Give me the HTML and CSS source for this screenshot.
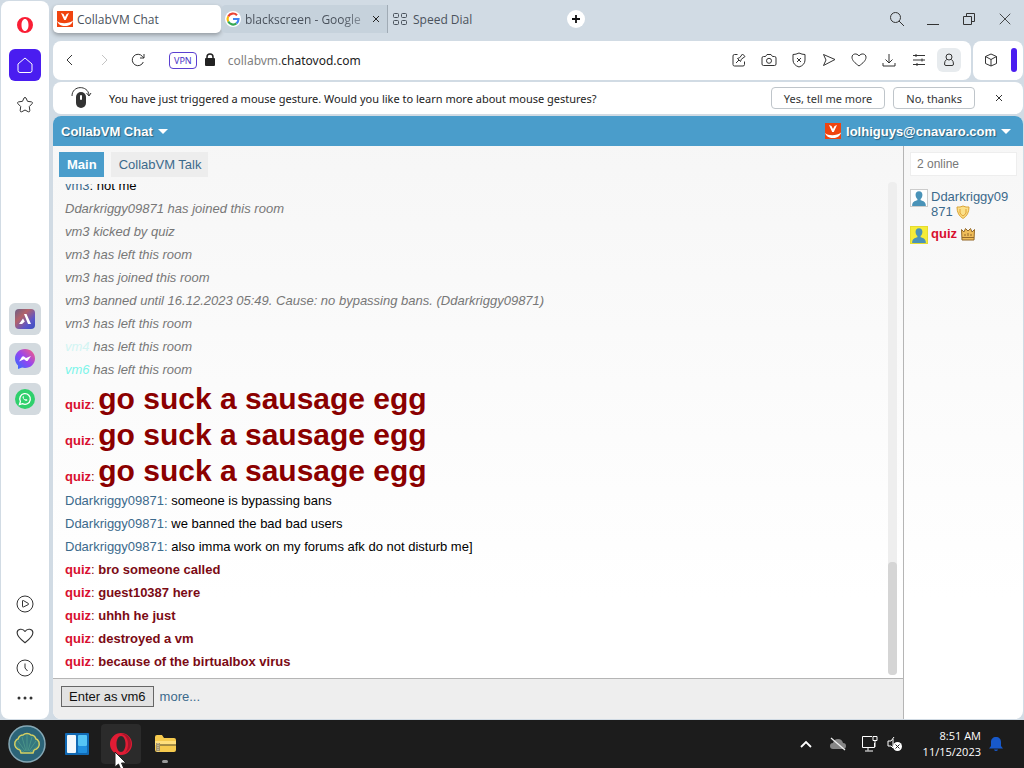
FILE: index.html
```html
<!DOCTYPE html>
<html lang="en">
<head>
  <title>CollabVM Chat</title>
  <meta charset="UTF-8">
  <link rel="stylesheet" href="styles.css">
</head>
<body>
  <!-- Shared icons -->
  <svg class="defs" width="0" height="0">
    <symbol id="chatovod" viewBox="0 0 16 16">
      <rect width="16" height="16" fill="#f0440f"/>
      <path d="M4 2l2.500 1L8 6l1.600-3L12 2 8.800 9H7.200z" fill="#fff"/>
      <path d="M0 10c3 3 12 3 16-.500C15 13.500 12 15 8 15s-7-2-8-5z" fill="#fff"/>
    </symbol>
    <symbol id="heart" viewBox="0 0 16 16">
      <path d="M8 14C4 11 1 8.500 1 5.200 1 1.500 6 .800 8 4c2-3.200 7-2.500 7 1.200C15 8.500 12 11 8 14z"/>
    </symbol>
    <symbol id="person" viewBox="2 1.500 14 14">
      <path d="M9 2.500c-2 0-3 1.300-3 3.200 0 1.700.6 2.900 1.600 3.600v1.200C5 11.200 3 12 3 15.500h12c0-3.500-2-4.300-4.600-5V9.300c1-.7 1.600-1.900 1.600-3.600 0-1.900-1-3.200-3-3.200z" fill="#4a93b8"/>
    </symbol>
    <symbol id="cross" viewBox="0 0 16 16">
      <path d="M2 2l12 12M14 2L2 14"/>
    </symbol>
  </svg>

  <div class="browser">
    <nav class="sidebar">
      <div class="side-group side-top">
        <a href="#" class="side-item" aria-label="Opera">
          <svg width="18" height="18" viewBox="0 0 18 18"><path fill-rule="evenodd" fill="#fa1e35" d="M9 1a8 8 0 1 0 0 16A8 8 0 0 0 9 1zm0 2c2 0 3.500 2.500 3.500 6S11 15 9 15s-3.500-2.500-3.500-6S7 3 9 3z"/></svg>
        </a>
        <a href="#" class="side-item side-home" aria-label="Home">
          <svg class="line" width="18" height="18" viewBox="0 0 18 18"><path d="M2 8l7-6 7 6v6.500a2 2 0 0 1-2 2H4a2 2 0 0 1-2-2z"/></svg>
        </a>
        <a href="#" class="side-item" aria-label="Bookmarks">
          <svg class="line" width="18" height="18" viewBox="0 0 18 18"><path d="M8 2q1-1.300 2 0l1.500 3.300 4 .6q1.700.5.600 1.800l-2.800 2.800.5 4q0 1.700-1.500 1.300L9 14l-3.300 1.800q-1.500.4-1.500-1.300l.5-4-2.800-2.800q-1.100-1.300.6-1.800l4-.6z"/></svg>
        </a>
      </div>
      <div class="side-group">
        <a href="#" class="side-item side-app" aria-label="Aria">
          <svg width="20" height="20" viewBox="0 0 20 20">
            <defs><linearGradient id="aria" x1="0" y1="0" x2="1" y2="1"><stop offset="0" stop-color="#6a5f86"/><stop offset=".35" stop-color="#b3626a"/><stop offset=".7" stop-color="#5c56c8"/><stop offset="1" stop-color="#3a50c0"/></linearGradient></defs>
            <rect width="20" height="20" rx="4" fill="url(#aria)"/><path d="M9 5h2.500l4.500 10h-3zM8 9.500l1.800 3L7 15H4z" fill="#fff"/>
          </svg>
        </a>
        <a href="#" class="side-item side-app" aria-label="Messenger">
          <svg width="20" height="20" viewBox="0 0 20 20">
            <defs><linearGradient id="msgr" x1="0" y1="1" x2="1" y2="0"><stop offset="0" stop-color="#2a70ff"/><stop offset=".5" stop-color="#9545f0"/><stop offset="1" stop-color="#ff5f78"/></linearGradient></defs>
            <path d="M10 0c5.800 0 10 4.200 10 9.500S15.800 19 10 19c-1 0-2-.1-2.900-.4L3 20v-3.500C1 14.700 0 12.300 0 9.500 0 4.200 4.200 0 10 0z" fill="url(#msgr)"/>
            <path d="M4 12.500l3-4.700q1-1 2-.3l2 1.600 5-2.100-3.100 4.500q-.9 1-1.900.3l-2-1.500z" fill="#fff"/>
          </svg>
        </a>
        <a href="#" class="side-item side-app" aria-label="WhatsApp">
          <svg width="20" height="20" viewBox="0 0 20 20">
            <circle cx="10" cy="10" r="10" fill="#2fd06c"/>
            <path d="M4.500 15.500l.9-3a5.300 5.300 0 1 1 2.100 2.100z" fill="none" stroke="#fff" stroke-width="1.300"/>
            <path d="M8 7.200c-.8.700-.4 2 .8 3.300 1.300 1.300 2.700 1.800 3.500.9l.1-.7-1.400-.8-.8.7c-.8-.3-1.400-.9-1.800-1.700l.6-.7-.6-1.200z" fill="#fff"/>
          </svg>
        </a>
      </div>
      <div class="side-group side-bottom">
        <a href="#" class="side-item" aria-label="Player">
          <svg class="line" width="18" height="18" viewBox="0 0 18 18"><circle cx="9" cy="9" r="8"/><path d="M6.500 6q0-.8.800-.5l5 2.900q.8.600 0 1.200l-5 2.400q-.8.300-.8-.6z"/></svg>
        </a>
        <a href="#" class="side-item" aria-label="Pinboards"><svg class="line" width="18" height="18"><use href="#heart"/></svg></a>
        <a href="#" class="side-item" aria-label="History">
          <svg class="line" width="18" height="18" viewBox="0 0 18 18"><circle cx="9" cy="9" r="8"/><path d="M9 4.500V9l2.500 3"/></svg>
        </a>
        <a href="#" class="side-item side-more" aria-label="More">
          <svg width="16" height="4" viewBox="0 0 16 4" fill="#333"><circle cx="2" cy="2" r="1.500"/><circle cx="8" cy="2" r="1.500"/><circle cx="14" cy="2" r="1.500"/></svg>
        </a>
      </div>
    </nav>

    <main class="window">
      <div class="tab-bar">
        <div class="tab tab-active">
          <svg width="16" height="16"><use href="#chatovod"/></svg>
          <span>CollabVM Chat</span>
        </div>
        <div class="tab tab-hover">
          <svg width="16" height="16" viewBox="0 0 16 16"><circle cx="8" cy="8" r="8" fill="#fff"/><g fill="none" stroke-width="2.200"><path d="M12 4.200A5.500 5.500 0 0 0 3.200 5.400" stroke="#ea4335"/><path d="M3.200 5.400a5.500 5.500 0 0 0 0 5.200" stroke="#fbbc05"/><path d="M3.200 10.600a5.500 5.500 0 0 0 8.300 1.700" stroke="#34a853"/><path d="M11.500 12.300A5.400 5.400 0 0 0 13.500 8H8" stroke="#4285f4"/></g></svg>
          <span class="tab-title">blackscreen - Google</span>
          <button class="tab-close" aria-label="Close tab"><svg class="line" width="8" height="8" viewBox="0 0 16 16" stroke-width="2"><use href="#cross"/></svg></button>
        </div>
        <div class="tab tab-plain">
          <svg class="line" width="14" height="14" viewBox="0 0 14 14"><rect x=".5" y="1.500" width="5" height="4" rx="1"/><rect x="8.500" y="1.500" width="5" height="4" rx="1"/><rect x=".5" y="8.500" width="5" height="4" rx="1"/><rect x="8.500" y="8.500" width="5" height="4" rx="1"/></svg>
          <span>Speed Dial</span>
        </div>
        <button class="new-tab" aria-label="New tab"><svg width="8" height="8" viewBox="0 0 8 8"><path d="M4 0v8M0 4h8" stroke="#111" stroke-width="1.800"/></svg></button>
        <div class="window-controls">
          <button aria-label="Search tabs"><svg class="line" width="16" height="16" viewBox="0 0 16 16"><circle cx="6.500" cy="6.500" r="5"/><path d="M10 10l5 5"/></svg></button>
          <button aria-label="Minimize"><svg class="line" width="12" height="12" viewBox="0 0 12 12"><path d="M0 11.500h12"/></svg></button>
          <button aria-label="Restore"><svg class="line" width="12" height="12" viewBox="0 0 12 12"><path d="M.500 3.500h8v8h-8zM3.500 3.500v-3h8v8h-3"/></svg></button>
          <button aria-label="Close"><svg class="line" width="14" height="14" viewBox="0 0 16 16"><use href="#cross"/></svg></button>
        </div>
      </div>

      <div class="toolbar">
        <div class="address-bar">
          <button class="nav-btn" aria-label="Back"><svg class="line" width="12" height="12" viewBox="0 0 12 12"><path d="M8 1L3 6l5 5"/></svg></button>
          <button class="nav-btn" aria-label="Forward" disabled><svg class="line" width="12" height="12" viewBox="0 0 12 12"><path d="M4 1l5 5-5 5"/></svg></button>
          <button class="nav-btn" aria-label="Reload"><svg class="line" width="14" height="14" viewBox="0 0 14 14"><path d="M12.300 9A5.700 5.700 0 1 1 11.500 3.500L13 5M13 1v4H9"/></svg></button>
          <button class="vpn">VPN</button>
          <svg width="12" height="14" viewBox="0 0 12 14"><rect x="1" y="5" width="10" height="8" rx="1" fill="#222"/><path d="M3 6V4a3 3 0 0 1 6 0v2" fill="none" stroke="#222" stroke-width="1.500"/></svg>
          <span class="url">collabvm.<b>chatovod.com</b></span>
          <div class="tools">
            <button aria-label="Edit"><svg class="line" width="16" height="16" viewBox="0 0 16 16"><path d="M6.500 2.500h-3q-1.500 0-1.500 1.500v8.500Q2 14 3.500 14H12q1.500 0 1.500-1.500v-3M5 11l3-3M6.500 6.500l3 3 .8-2.200L14 4.500 11.500 2 8.700 5.700z"/></svg></button>
            <button aria-label="Snapshot"><svg class="line" width="16" height="16" viewBox="0 0 16 16"><path d="M2.500 4.500h2L6 2.500h4l1.500 2h2q1.500 0 1.500 1.500v6q0 1.500-1.500 1.500h-11Q1 13.500 1 12V6q0-1.500 1.500-1.500z"/><circle cx="8" cy="8.800" r="2.500"/></svg></button>
            <button aria-label="Ad blocker"><svg class="line" width="16" height="16" viewBox="0 0 16 16"><path d="M8 1q3 1.500 6 1.500V8q0 5-6 7-6-2-6-7V2.500Q5 2.500 8 1zM6 6l4 4M10 6l-4 4"/></svg></button>
            <button aria-label="Flow"><svg class="line" width="16" height="16" viewBox="0 0 16 16"><path d="M2.500 2.500l11.500 5-11.500 6L5 8z"/></svg></button>
            <button aria-label="Favorite"><svg class="line" width="16" height="16"><use href="#heart"/></svg></button>
            <button aria-label="Downloads"><svg class="line" width="16" height="16" viewBox="0 0 16 16"><path d="M8 2v9M4.500 7.500L8 11l3.500-3.500M2 11v3h12v-3"/></svg></button>
            <button aria-label="Easy setup"><svg class="line" width="16" height="16" viewBox="0 0 16 16"><path d="M2 3.500h12M2 8h12M2 12.500h12M5 2v3M11 6.500v3M6 11v3"/></svg></button>
            <button class="tool-on" aria-label="Profile"><svg class="line" width="16" height="16" viewBox="0 0 16 16"><circle cx="8" cy="5" r="3"/><path d="M5.500 7.500Q3.500 9 3.500 12q0 1.500 1.500 1.500h6q1.500 0 1.500-1.500 0-3-2-4.500"/></svg></button>
          </div>
        </div>
        <div class="extensions">
          <button aria-label="Extensions"><svg class="line" width="14" height="14" viewBox="0 0 14 14"><path d="M7 1l5.500 2.500v7L7 13l-5.500-2.500v-7zM1.500 3.500L7 6.500l5.500-3M7 6.500V13"/></svg></button>
          <span class="purple-bar"></span>
        </div>
      </div>

      <div class="notice">
        <svg width="22" height="24" viewBox="0 0 22 24"><rect x="5" y="6" width="10" height="16" rx="5" fill="#333"/><rect x="9" y="9" width="2" height="5" rx="1" fill="#fff"/><path d="M1 10C1 -1 17 -1 18 9M15.500 7l2.500 3 2-3" fill="none" stroke="#333"/></svg>
        <p>You have just triggered a mouse gesture. Would you like to learn more about mouse gestures?</p>
        <button class="notice-btn">Yes, tell me more</button>
        <button class="notice-btn">No, thanks</button>
        <button class="notice-close" aria-label="Dismiss"><svg class="line" width="8" height="8" viewBox="0 0 16 16" stroke-width="2"><use href="#cross"/></svg></button>
      </div>

      <div class="page">
        <header class="chat-header">
          <a href="#" class="menu-link">CollabVM Chat<span class="caret"></span></a>
          <a href="#" class="menu-link"><svg width="16" height="16"><use href="#chatovod"/></svg>lolhiguys@cnavaro.com<span class="caret"></span></a>
        </header>
        <div class="chat-body">
          <section class="room">
            <div class="room-tabs">
              <a href="#" class="room-tab room-active">Main</a>
              <a href="#" class="room-tab">CollabVM Talk</a>
            </div>
            <div class="log-wrap">
              <div class="log">
                <p><span class="nick">vm3</span>: not me</p>
                <p class="event">Ddarkriggy09871 has joined this room</p>
                <p class="event">vm3 kicked by quiz</p>
                <p class="event">vm3 has left this room</p>
                <p class="event">vm3 has joined this room</p>
                <p class="event">vm3 banned until 16.12.2023 05:49. Cause: no bypassing bans. (Ddarkriggy09871)</p>
                <p class="event">vm3 has left this room</p>
                <p class="event"><span class="nick-pale">vm4</span> has left this room</p>
                <p class="event"><span class="nick-aqua">vm6</span> has left this room</p>
                <p class="shout"><span class="nick-red">quiz</span>: <strong>go suck a sausage egg</strong></p>
                <p class="shout"><span class="nick-red">quiz</span>: <strong>go suck a sausage egg</strong></p>
                <p class="shout"><span class="nick-red">quiz</span>: <strong>go suck a sausage egg</strong></p>
                <p><span class="nick">Ddarkriggy09871:</span> someone is bypassing bans</p>
                <p><span class="nick">Ddarkriggy09871:</span> we banned the bad bad users</p>
                <p><span class="nick">Ddarkriggy09871:</span> also imma work on my forums afk do not disturb me]</p>
                <p class="quiz"><span class="nick-red">quiz</span>: <strong>bro someone called</strong></p>
                <p class="quiz"><span class="nick-red">quiz</span>: <strong>guest10387 here</strong></p>
                <p class="quiz"><span class="nick-red">quiz</span>: <strong>uhhh he just</strong></p>
                <p class="quiz"><span class="nick-red">quiz</span>: <strong>destroyed a vm</strong></p>
                <p class="quiz"><span class="nick-red">quiz</span>: <strong>because of the birtualbox virus</strong></p>
              </div>
              <div class="scrollbar"><div class="thumb"></div></div>
            </div>
            <div class="enter-bar">
              <button class="enter-btn">Enter as vm6</button>
              <a href="#">more...</a>
            </div>
          </section>
          <aside class="users">
            <div class="online">2 online</div>
            <ul>
              <li>
                <svg class="avatar" width="18" height="18"><use href="#person"/></svg>
                <a href="#">Ddarkriggy09871 <svg class="badge" width="14" height="14" viewBox="0 0 14 14"><path d="M1 2q3 .5 6-1 3 1.500 6 1 0 8-6 11.500Q1 10 1 2z" fill="#fbe08a" stroke="#dba436"/><path d="M4 4v4q1 2 3 3 2-1 3-3V4" fill="none" stroke="#e0a030"/></svg></a>
              </li>
              <li>
                <svg class="avatar avatar-yellow" width="18" height="18"><use href="#person"/></svg>
                <a href="#" class="owner">quiz <svg class="badge" width="14" height="14" viewBox="0 0 14 14"><path d="M1 13L.5 2.500 3 5l1.500-3.500L7 4l2.500-2.500L11 5l2.500-2.500L13 13z" fill="#f0bd58" stroke="#94692a"/><path d="M1 10.500h12M4 9V7M7 9V6M10 9V7" stroke="#94692a"/></svg></a>
              </li>
            </ul>
          </aside>
        </div>
      </div>
    </main>
  </div>

  <footer class="taskbar">
    <button class="start" aria-label="Start">
      <svg width="38" height="38" viewBox="0 0 38 38">
        <circle cx="19" cy="19" r="18" fill="#2c6478" stroke="#86a8b5" stroke-width="1.500"/>
        <path d="M13 28h12l1-3c4-1 6-4 5-8-1-2-2-3-3-3-1-3-3-4-5-4-2-2-6-2-8 0-2 0-4 1-5 4-1 0-2 1-3 3-1 4 1 7 5 8z" fill="#35787e" stroke="#d5cf62" stroke-width="1.500"/>
        <path d="M17 26l-7-10M18 26l-4-14M19 26V10M20 26l4-14M21 26l7-10M16 27l-8-6M22 27l8-6" stroke="#4a9488" stroke-width="1"/>
      </svg>
    </button>
    <button class="task" aria-label="Widgets">
      <svg width="24" height="22" viewBox="0 0 24 22"><rect width="24" height="22" rx="1" fill="#1069b4"/><rect x="2" y="2" width="9" height="18" rx="1" fill="#f2f8fc"/><rect x="13" y="2" width="9" height="11" rx="1" fill="#55c4f5"/><rect x="13" y="13" width="9" height="7" rx="1" fill="#2090e0"/></svg>
    </button>
    <button class="task task-active" aria-label="Opera">
      <svg width="24" height="24" viewBox="0 0 24 24"><path fill-rule="evenodd" fill="#e01c34" d="M12 1a11 11 0 1 0 0 22 11 11 0 0 0 0-22zm0 3c2.500 0 4.500 3.500 4.500 8s-2 8-4.500 8-4.500-3.500-4.500-8S9.500 4 12 4z"/><path d="M12 2c9-2 15 13 4 19 4-5 4-13 0-17-1-1-2.500-2-4-2z" fill="#a5152a"/></svg>
      <svg class="cursor" width="14" height="20" viewBox="0 0 14 20"><path d="M1 1v15l3.500-3 2.500 6 3-1.300L7.500 12H12z" fill="#fff" stroke="#222"/></svg>
    </button>
    <button class="task task-open" aria-label="Files">
      <svg width="22" height="20" viewBox="0 0 22 20"><path d="M1 3q0-2 2-2h5l2 3h10q2 0 2 2v10q0 2-2 2H3q-2 0-2-2z" fill="#f6ca4e"/><path d="M1 7h21v4H1z" fill="#ffdf7c"/><path d="M4 11h18" stroke="#87753b" stroke-width="1.500"/><path d="M2 9h4v8H2z" fill="#a3946a"/><path d="M4 9v9" stroke="#ded6bf" stroke-dasharray="1 1"/></svg>
    </button>
    <div class="tray">
      <svg width="12" height="8" viewBox="0 0 12 8"><path d="M1 7l5-5 5 5" fill="none" stroke="#fff" stroke-width="1.800"/></svg>
      <svg class="tray-cloud" width="18" height="14" viewBox="0 0 18 14"><path d="M4 12Q1 12 1 9t3-3q1-4 5-4t5 4q3 0 3 3t-3 3z" fill="#868686"/><path d="M2 1l14 12" stroke="#eee" stroke-width="1.300"/></svg>
      <svg class="tray-net" width="18" height="18" viewBox="0 0 18 18" fill="none" stroke="#fff"><path d="M11 1.500H1.500v11h12V8M7 12.500v3M4 16h8M12 1.500h4v4h-4zM14 5.500V12"/></svg>
      <svg class="tray-sound" width="16" height="16" viewBox="0 0 16 16"><path d="M7 1L4 5H1v5h3l2 2V3" fill="none" stroke="#fff"/><circle cx="10.500" cy="10.500" r="4.500" fill="#fff"/><path d="M8.500 8.500l4 4M12.500 8.500l-4 4" stroke="#222"/></svg>
      <div class="clock"><div>8:51 AM</div><div>11/15/2023</div></div>
      <svg width="14" height="16" viewBox="0 0 14 16"><path d="M7 1C4 1 2 3 2 6v4l-2 2.500h14L12 10V6c0-3-2-5-5-5zM5 13.500h4Q8.500 15 7 15t-2-1.500z" fill="#1859ca"/></svg>
    </div>
  </footer>
</body>
</html>
```

FILE: styles.css
```css
:root {
  --chrome: #d1dbe4;
  --blue: #4a9dcb;
  --link: #3c6a8c;
  --ink: #333;
  --ui-font: "Open Sans", "Noto Sans", sans-serif;
  --wide-font: "Noto Sans", "Open Sans", sans-serif;
  --chat-font: "Liberation Sans", Arial, sans-serif;
}

* {
  box-sizing: border-box;
  margin: 0;
  padding: 0;
}

body {
  display: flex;
  flex-direction: column;
  height: 100vh;
  background: var(--chrome);
  color: var(--ink);
  font-family: var(--ui-font);
  font-size: 12px;
  overflow: hidden;
}

button {
  border: none;
  background: none;
  font: inherit;
  color: inherit;
  display: flex;
  align-items: center;
  justify-content: center;
}

a {
  color: var(--link);
  text-decoration: none;
}

svg {
  flex: none;
}

.defs {
  position: absolute;
}

.line {
  fill: none;
  stroke: currentColor;
  stroke-linejoin: round;
}

.browser {
  flex: 1;
  min-height: 0;
  display: flex;
  gap: 4px;
  padding: 0 1px 1px;
}

/* Sidebar */
.sidebar {
  width: 48px;
  flex: none;
  margin-top: 1px;
  padding: 8px 0 7px;
  background: #fff;
  border-radius: 8px;
  display: flex;
  flex-direction: column;
  justify-content: space-between;
}

.side-group {
  display: flex;
  flex-direction: column;
  align-items: center;
  gap: 8px;
}

.side-top {
  padding-bottom: 9px;
}

.side-bottom {
  gap: 0;
}

.side-item {
  width: 32px;
  height: 32px;
  border-radius: 6px;
  display: flex;
  align-items: center;
  justify-content: center;
  color: var(--ink);
}

.side-home {
  background: #4a1df0;
  color: #fff;
}

.side-app {
  background: #d3dadf;
}

.side-more {
  height: 28px;
}

/* Browser window */
.window {
  flex: 1;
  min-width: 0;
  display: flex;
  flex-direction: column;
}

.tab-bar {
  height: 41px;
  flex: none;
  display: flex;
  align-items: center;
  padding-bottom: 3px;
}

.tab {
  height: 28px;
  display: flex;
  align-items: center;
  gap: 4px;
  padding: 0 4px;
  border-radius: 5px;
  color: #4a525c;
}

.tab-active {
  width: 168px;
  background: #fff;
  box-shadow: 0 2px 4px rgba(0, 0, 0, 0.3);
}

.tab-hover {
  width: 167px;
  background: #c6d2dc;
  border-right: 1px solid #a0abb5;
  border-radius: 5px 0 0 5px;
}

.tab-title {
  flex: 1;
  white-space: nowrap;
  mask-image: linear-gradient(to right, #000 80%, rgba(0, 0, 0, 0.4));
}

.tab-close {
  width: 14px;
  height: 16px;
  color: #222;
}

.tab-plain {
  padding-left: 5px;
  gap: 6px;
}

.new-tab {
  width: 18px;
  height: 18px;
  margin-left: 91px;
  border-radius: 50%;
  background: #fff;
}

.window-controls {
  margin-left: auto;
  display: flex;
}

.window-controls button {
  width: 36px;
  height: 36px;
}

.toolbar {
  display: flex;
  gap: 2px;
  height: 39px;
  flex: none;
}

.address-bar,
.extensions {
  background: #fff;
  border-radius: 8px;
  display: flex;
  align-items: center;
}

.address-bar {
  flex: 1;
  padding: 0 7px 1px 0;
}

.nav-btn {
  width: 34px;
  height: 34px;
}

.nav-btn:disabled {
  color: #c4c4c4;
}

.vpn {
  height: 17px;
  margin: 0 7px 0 14px;
  padding: 0 4px;
  border: 1px solid #5a3fd0;
  border-radius: 4px;
  color: #4a30c8;
  font-family: var(--wide-font);
  font-size: 9px;
}

.url {
  margin-left: 12px;
  color: #808080;
  font-family: var(--wide-font);
  font-size: 12px;
}

.url b {
  color: #222;
  font-weight: normal;
}

.tools {
  margin-left: auto;
  display: flex;
}

.tools button {
  width: 30px;
  height: 24px;
}

.tools .tool-on {
  width: 24px;
  margin: 0 3px;
  background: #e7ebee;
  border-radius: 6px;
}

.extensions {
  width: 50px;
  justify-content: space-between;
  padding: 0 6px 1px 11px;
}

.purple-bar {
  width: 6px;
  height: 24px;
  border-radius: 3px;
  background: #4a1df0;
}

.notice {
  height: 32px;
  flex: none;
  margin: 2px 0;
  padding: 0 15px 0 18px;
  display: flex;
  align-items: center;
  background: #fff;
  border-radius: 8px;
  font-family: var(--wide-font);
  font-size: 11px;
}

.notice p {
  flex: 1;
  margin-left: 16px;
  color: #222;
  white-space: nowrap;
}

.notice-btn {
  height: 22px;
  margin-right: 8px;
  padding: 0 12px;
  border: 1px solid #bfc5ca;
  border-radius: 4px;
}

.notice-close {
  margin-left: 7px;
  width: 18px;
  height: 18px;
}

/* Chat page */
.page {
  flex: 1;
  min-height: 0;
  display: flex;
  flex-direction: column;
  border-radius: 8px;
  overflow: hidden;
  background: linear-gradient(#f6f6f6, #fff 80%);
  font-family: var(--chat-font);
  font-size: 13px;
}

.chat-header {
  height: 30px;
  flex: none;
  display: flex;
  align-items: center;
  justify-content: space-between;
  padding: 0 12px 0 8px;
  background: var(--blue);
}

.menu-link {
  display: flex;
  align-items: center;
  gap: 5px;
  color: #fff;
  font-weight: bold;
  text-shadow: 1px 1px 1px rgba(0, 0, 0, 0.4);
}

.caret {
  border: 5px solid transparent;
  border-top-color: #fff;
  border-bottom: none;
}

.chat-body {
  flex: 1;
  min-height: 0;
  display: flex;
}

.room {
  flex: 1;
  min-width: 0;
  display: flex;
  flex-direction: column;
}

.room-tabs {
  flex: none;
  display: flex;
  gap: 7px;
  padding: 6px 6px 5px;
}

.room-tab {
  padding: 0 7px 0 8px;
  line-height: 25px;
  background: #ededed;
}

.room-active {
  background: var(--blue);
  color: #fff;
  font-weight: bold;
}

.log-wrap {
  flex: 1;
  min-height: 0;
  display: flex;
  padding-right: 6px;
}

.log {
  flex: 1;
  display: flex;
  flex-direction: column;
  justify-content: flex-end;
  margin-top: 2px;
  padding: 0 12px 5px;
  overflow: hidden;
  color: #000;
}

.log p {
  flex: none;
  line-height: 23px;
}

.log .event {
  color: #777;
  font-style: italic;
}

.log .shout {
  height: 36px;
  line-height: 36px;
  color: #8b0000;
}

.shout strong {
  font-size: 30px;
}

.log .quiz {
  color: #7b0a14;
}

.nick {
  color: var(--link);
}

.nick-red {
  color: #d8102f;
  font-weight: bold;
}

.nick-pale {
  color: #d2f5f3;
}

.nick-aqua {
  color: #7df5ea;
}

.scrollbar {
  width: 9px;
  margin-bottom: 3px;
  display: flex;
  align-items: flex-end;
  background: #eee;
  border-radius: 4px;
}

.thumb {
  width: 100%;
  height: 23%;
  border-radius: 4px;
  background: #d5d5d5;
}

.enter-bar {
  height: 41px;
  flex: none;
  display: flex;
  align-items: center;
  gap: 4px;
  padding: 0 8px 5px;
  border-top: 1px solid #b5b5b5;
  background: #eee;
}

.enter-btn {
  height: 21px;
  padding: 0 7px;
  border: 1px solid #666;
  background: #e2e2e2;
  color: #111;
}

.enter-bar a {
  padding-left: 2px;
}

.users {
  width: 120px;
  flex: none;
  padding: 6px;
  border-left: 1px solid #b5b5b5;
}

.online {
  height: 24px;
  padding: 0 6px;
  border: 1px solid #eee;
  background: #fff;
  color: #777;
  font-size: 12px;
  line-height: 22px;
}

.users ul {
  margin-top: 13px;
  list-style: none;
}

.users li {
  display: flex;
  gap: 3px;
  margin-bottom: 7px;
  padding-right: 6px;
  line-height: 15px;
  word-break: break-all;
}

.avatar {
  border: 1px solid #ccc;
  background: #fff;
}

.avatar-yellow {
  border-color: #e5dc30;
  background: #f5ec38;
}

.badge {
  vertical-align: -3px;
}

.users .owner {
  color: #d8102f;
  font-weight: bold;
}

/* Taskbar */
.taskbar {
  height: 48px;
  flex: none;
  display: flex;
  align-items: center;
  gap: 4px;
  padding: 0 21px 0 8px;
  background: #1c1c1c;
  color: #fff;
}

.start {
  width: 45px;
  height: 40px;
  justify-content: flex-start;
}

.task {
  position: relative;
  width: 40px;
  height: 40px;
  border-radius: 4px;
}

.task-active {
  background: #2b2b2b;
}

.task-open::after {
  content: "";
  position: absolute;
  bottom: 1px;
  left: 17px;
  width: 6px;
  height: 3px;
  border-radius: 2px;
  background: #9a9a9a;
}

.cursor {
  position: absolute;
  left: 13px;
  top: 27px;
  z-index: 1;
}

.tray {
  margin-left: auto;
  display: flex;
  align-items: center;
}

.tray-cloud {
  margin-left: 17px;
}

.tray-net {
  margin-left: 14px;
}

.tray-sound {
  margin-left: 8px;
}

.clock {
  width: 78px;
  margin-right: 8px;
  font-size: 11px;
  line-height: 16px;
  text-align: right;
}
```
